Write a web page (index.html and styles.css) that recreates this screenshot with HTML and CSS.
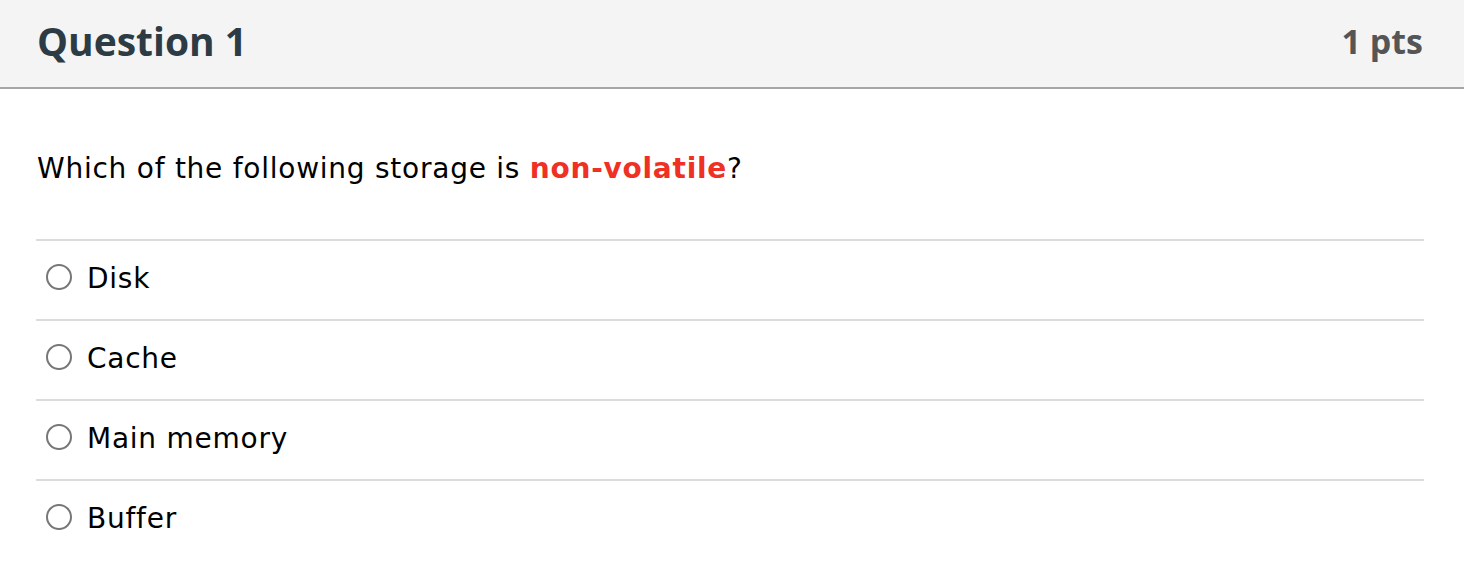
FILE: index.html
```html
<!DOCTYPE html>
<html>
<head>
<meta charset="utf-8">
<link rel="stylesheet" href="styles.css">
</head>
<body>
<div class="question">
  <div class="q-header">
    <h2 class="q-title">Question 1</h2>
    <div class="q-points">1 pts</div>
  </div>
  <div class="q-body">
    <p class="q-text">Which of the following storage is <strong class="hl">non-volatile</strong>?</p>
    <div class="answers">
      <label class="answer"><span class="radio"></span><span class="answer-text">Disk</span></label>
      <label class="answer"><span class="radio"></span><span class="answer-text">Cache</span></label>
      <label class="answer"><span class="radio"></span><span class="answer-text">Main memory</span></label>
      <label class="answer"><span class="radio"></span><span class="answer-text">Buffer</span></label>
    </div>
  </div>
</div>
</body>
</html>
```

FILE: styles.css
```css
html, body {
  margin: 0;
  padding: 0;
  background: #ffffff;
}

.question {
  width: 1464px;
}

.q-header {
  box-sizing: border-box;
  display: flex;
  align-items: center;
  justify-content: space-between;
  height: 89px;
  padding: 0 41px 6px 37px;
  background: #f4f4f4;
  border-bottom: 2px solid #a6a6a6;
  font-family: "Open Sans", "Lato", sans-serif;
  font-weight: 700;
}

.q-title {
  margin: 0;
  font-size: 39px;
  font-weight: 700;
  color: #2d3b45;
  letter-spacing: 0;
}

.q-points {
  font-size: 34px;
  font-weight: 700;
  color: #555555;
}

.q-body {
  padding: 0 40px 0 36px;
  font-family: "DejaVu Sans", Verdana, sans-serif;
  font-size: 28px;
  letter-spacing: 0.75px;
  color: #000000;
}

.q-text {
  margin: 63px 0 54px 1px;
  line-height: 33px;
}

.hl {
  color: #ee3124;
  font-weight: 700;
}

.answers {
  display: flex;
  flex-direction: column;
}

.answer {
  box-sizing: border-box;
  display: flex;
  align-items: center;
  gap: 15px;
  height: 80px;
  padding: 0 0 4px 10px;
  border-top: 2px solid #dcdcdc;
  line-height: 33px;
}

.radio {
  width: 22px;
  height: 22px;
  border: 2px solid #777777;
  border-radius: 50%;
  background: #fff;
  flex: none;
  margin-top: -2px;
}
```
